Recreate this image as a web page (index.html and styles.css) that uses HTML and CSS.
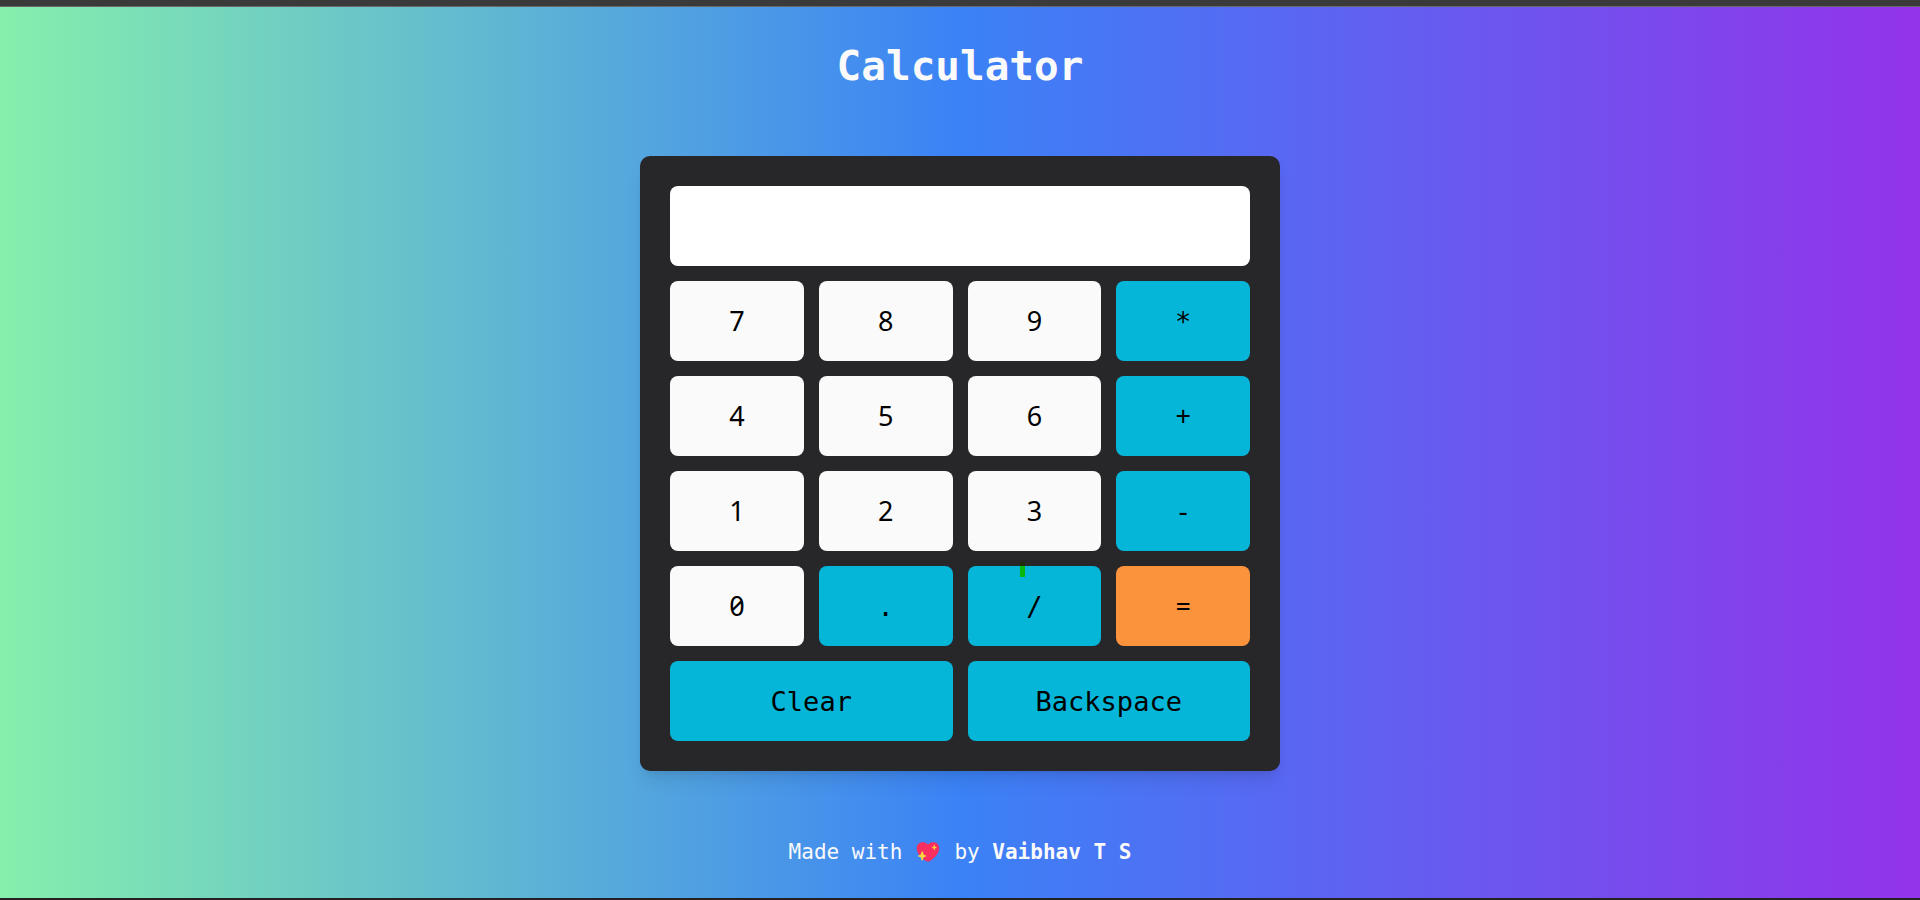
FILE: index.html
```html
<!DOCTYPE html>
<html lang="en">
<head>
<meta charset="utf-8">
<title>Calculator</title>
<link rel="stylesheet" href="styles.css">
</head>
<body class="page">
<header class="header"><h1 class="title">Calculator</h1></header>
<main class="calculator">
  <input class="display" type="text" aria-label="Result" readonly>
  <button class="key" type="button">7</button>
  <button class="key" type="button">8</button>
  <button class="key" type="button">9</button>
  <button class="key key-op key-mono" type="button">*</button>
  <button class="key" type="button">4</button>
  <button class="key" type="button">5</button>
  <button class="key" type="button">6</button>
  <button class="key key-op" type="button">+</button>
  <button class="key" type="button">1</button>
  <button class="key" type="button">2</button>
  <button class="key" type="button">3</button>
  <button class="key key-op key-mono" type="button">-</button>
  <button class="key" type="button">0</button>
  <button class="key key-op key-mono" type="button">.</button>
  <button class="key key-op key-mono key-divide" type="button">/<span class="marker"></span></button>
  <button class="key key-equals" type="button">=</button>
  <button class="key key-op key-mono key-wide" type="button">Clear</button>
  <button class="key key-op key-mono key-wide" type="button">Backspace</button>
</main>
<footer class="footer">
  <span>Made with</span>
  <svg class="heart" viewBox="0 0 24 20" role="img" aria-label="love">
    <path fill="#f92f60" d="M12 2.600C10.500 .9 8.600 .3 6.600 .3C3 .3 .8 3 .8 6.400C.8 12 7 17 10.700 19.300Q12 20 13.300 19.300C17 17 23.200 12 23.200 6.400C23.200 3 21 .3 17.400 .3C15.400 .3 13.500 .9 12 2.600Z"/>
    <path fill="#fcd53f" d="M6.200 9.200Q6.700 9.200 6.900 10L7.600 12.600L9.900 13.400Q10.900 13.900 9.900 14.400L7.600 15.200L6.900 17.900Q6.200 19.300 5.500 17.900L4.800 15.200L2.300 14.400Q1.300 13.900 2.300 13.400L4.800 12.600L5.500 10Q5.700 9.200 6.200 9.200Z"/>
    <path fill="#fcd53f" d="M18.300 2.800Q18.600 2.800 18.700 3.300L19.200 4.700L20.600 5.200Q21.200 5.500 20.600 5.800L19.200 6.300L18.700 7.800Q18.300 8.600 17.900 7.800L17.400 6.300L16 5.800Q15.400 5.500 16 5.200L17.400 4.700L17.900 3.300Q18 2.800 18.300 2.800Z"/>
  </svg>
  <span>by <strong>Vaibhav T S</strong></span>
</footer>
</body>
</html>
```
FILE: styles.css
```css
* { box-sizing: border-box; }
.page {
  margin: 0;
  min-height: 100vh;
  display: flex;
  flex-direction: column;
  align-items: center;
  border-top: 6px solid #3a3a3a;
  border-bottom: 2px solid #222;
  background: linear-gradient(to right, #86efac, #3b82f6, #9333ea) padding-box;
  color: #fafafa;
  font-family: "DejaVu Sans Mono", monospace;
}
.header {
  width: 100%;
  padding: 34px 16px 65px;
  border-top: 1px solid #686868;
  text-align: center;
}
.title {
  margin: 0;
  font-size: 41px;
  line-height: 50px;
}
.calculator {
  width: 100%;
  max-width: 640px;
  padding: 30px;
  display: grid;
  grid-template-columns: repeat(4, 1fr);
  gap: 15px;
  border-radius: 10px;
  background: #27272a;
  box-shadow: 0 12px 18px -4px rgba(0, 0, 0, .1), 0 5px 8px -5px rgba(0, 0, 0, .1);
}
.display {
  grid-column: span 4;
  width: 100%;
  height: 80px;
  padding: 0 20px;
  border: 0;
  border-radius: 8px;
  background: #fff;
  font: 27px "DejaVu Sans Mono", monospace;
  text-align: right;
}
.key {
  height: 80px;
  padding: 0 0 2px;
  border: 0;
  border-radius: 8px;
  background: #fafafa;
  color: #000;
  font: 27px "Noto Sans", sans-serif;
  font-feature-settings: "zero";
}
.key-op { background: #06b6d8; }
.key-equals { background: #fb923c; }
.key-mono {
  padding: 0;
  font-family: "DejaVu Sans Mono", monospace;
}
.key-wide { grid-column: span 2; }
.key-divide { position: relative; }
.marker {
  position: absolute;
  top: -4px;
  left: 52px;
  width: 5px;
  height: 15px;
  background: linear-gradient(#202a08 4px, #08b80f 4px);
}
.footer {
  display: flex;
  align-items: center;
  gap: 14px;
  padding: 65px 16px 0;
  font-size: 21px;
  line-height: 32px;
  white-space: nowrap;
}
.heart { width: 24px; height: 20px; }
```
